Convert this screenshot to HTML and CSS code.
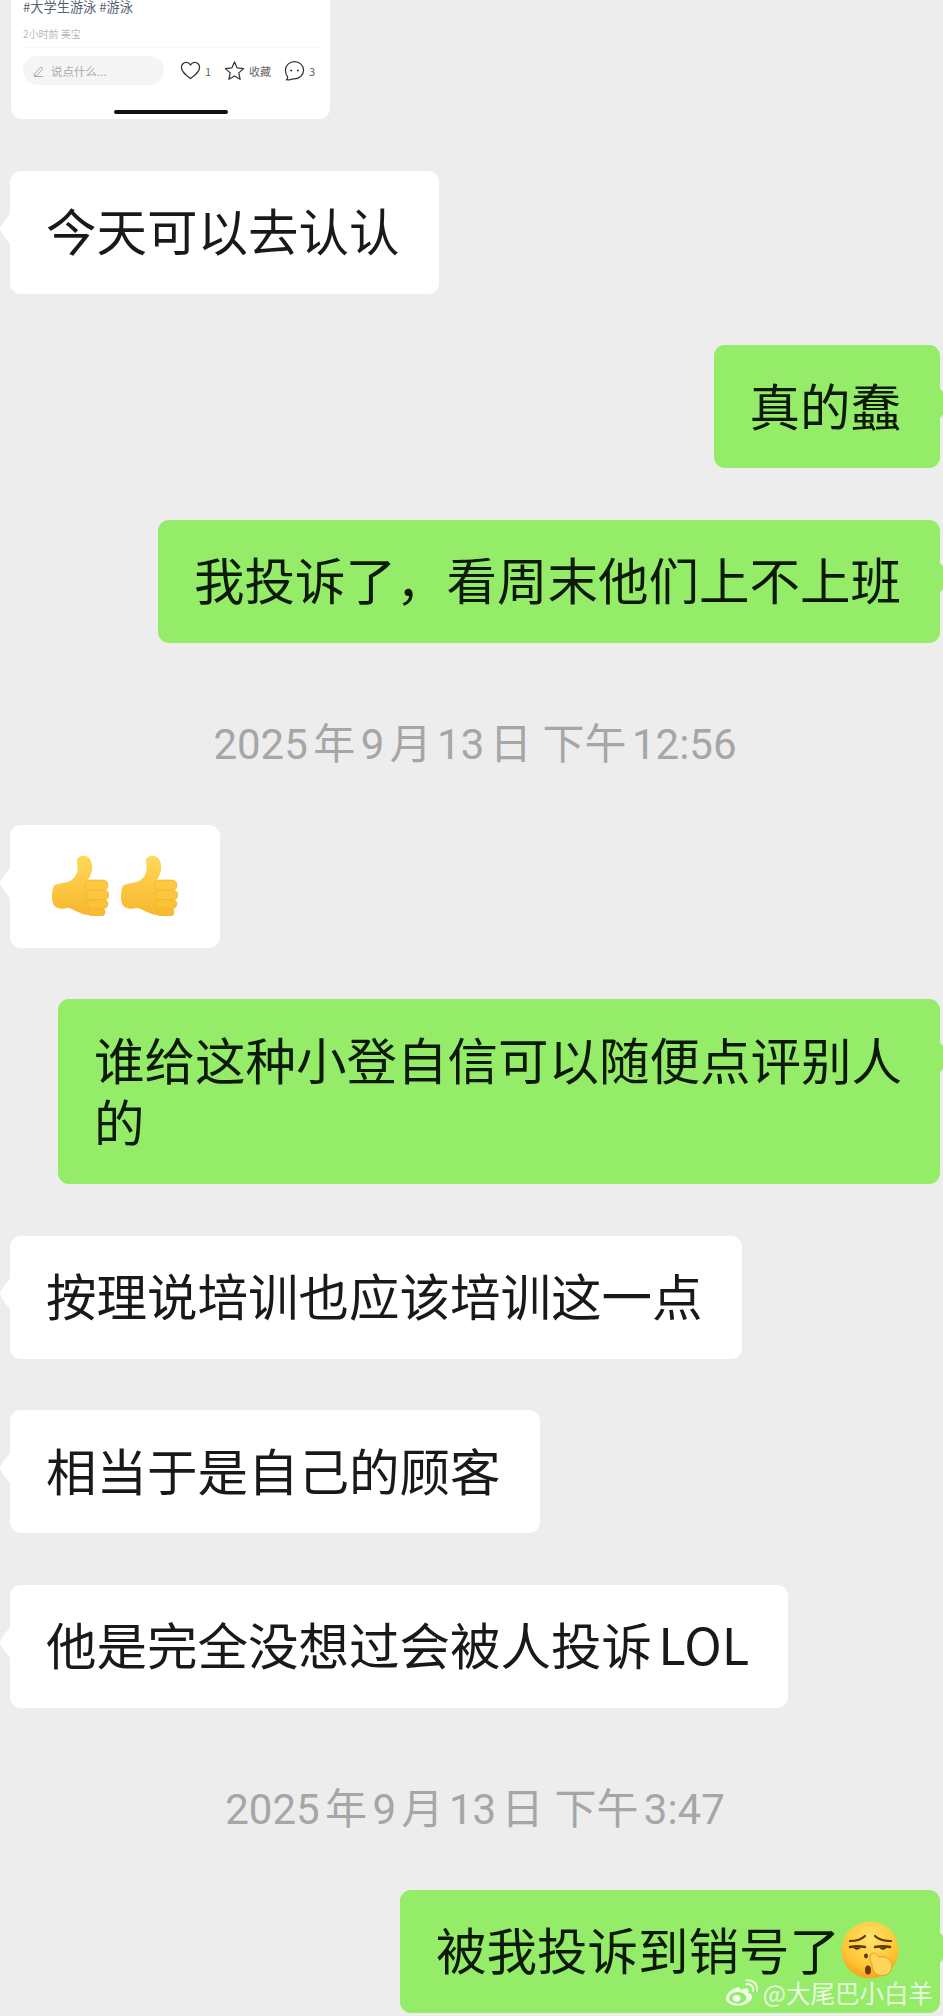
FILE: index.html
```html
<!DOCTYPE html>
<html lang="zh-CN">
<head>
    <meta charset="UTF-8">
    <meta name="viewport" content="width=device-width, initial-scale=1.0">
    <title>聊天记录</title>
    <link rel="stylesheet" href="styles.css">
</head>
<body>
    <svg class="defs" width="0" height="0">
        <defs>
            <linearGradient id="thumbFill" x1="0" y1="0" x2="0" y2="1">
                <stop offset="0" stop-color="#ffd95a"/>
                <stop offset="1" stop-color="#f8b62e"/>
            </linearGradient>
            <radialGradient id="faceFill" cx="0.5" cy="0.3" r="0.75">
                <stop offset="0" stop-color="#ffe36b"/>
                <stop offset="0.65" stop-color="#ffc533"/>
                <stop offset="1" stop-color="#f79a1e"/>
            </radialGradient>
            <symbol id="thumb" viewBox="0 0 57 61">
                <path d="M3 30c5-2 11-2 15-4 6-4 9-9 7-19-1-7 11-9 14-1 3 8 0 14-3 19l5 25v9c-4 2-9 1-15-2-5-2-7-4-11-4-3 1-7 1-9 0-4-1-6-5-6-11 0-6 1-11 3-12z" fill="url(#thumbFill)"/>
                <rect x="33" y="25" width="23" height="10.5" rx="5" fill="#fcc840" stroke="#f0ae24" stroke-width=".6"/>
                <rect x="34" y="35" width="23" height="10" rx="5" fill="#fcc63c" stroke="#f0ae24" stroke-width=".6"/>
                <rect x="35" y="44.500" width="21" height="9" rx="4.500" fill="#fbc238" stroke="#f0ae24" stroke-width=".6"/>
                <rect x="36" y="53" width="17" height="8" rx="4" fill="#f9bc30" stroke="#f0ae24" stroke-width=".6"/>
            </symbol>
        </defs>
    </svg>

    <main class="chat">
        <section class="card">
            <p class="tags">#大学生游泳 #游泳</p>
            <p class="meta">2小时前 美宝</p>
            <div class="actions">
                <div class="say">
                    <svg class="pen" viewBox="0 0 12 12"><path d="M1.500 9l6.500-7 2 1.800-6.500 6.700-2.300.4zM1 11.500h9" fill="none" stroke="#999" stroke-width=".8"/></svg>
                    <span>说点什么...</span>
                </div>
                <div class="action">
                    <svg class="act-icon" viewBox="0 0 22 20"><path d="M11 18.500C5 14 1.500 11 1.500 6.800 1.500 3.600 4 1.500 6.500 1.500c2 0 3.500 1 4.500 2.600 1-1.600 2.500-2.600 4.500-2.600 2.500 0 5 2.100 5 5.300 0 4.200-3.500 7.200-9.500 11.700z" fill="none" stroke="#333" stroke-width="1.300"/></svg>
                    <span>1</span>
                </div>
                <div class="action">
                    <svg class="act-icon" viewBox="0 0 22 21"><path d="M11 1.500l2.800 6.300 6.700.7-5 4.500 1.400 6.700-5.900-3.400-5.900 3.400 1.400-6.700-5-4.500 6.700-.7z" fill="none" stroke="#333" stroke-width="1.300" stroke-linejoin="round"/></svg>
                    <span>收藏</span>
                </div>
                <div class="action">
                    <svg class="act-icon" viewBox="0 0 22 21"><path d="M11 1.200c5.200 0 9.500 4 9.500 9s-4.300 9-9.500 9c-1.500 0-3 0-4.500.8-1.200.4-2.500.4-3.700.2.800-.8 1.200-1.800 1-3C2.500 15.500 1.500 13 1.500 10.200c0-5 4.300-9 9.500-9z" fill="none" stroke="#333" stroke-width="1.300"/><circle cx="7.500" cy="10.500" r="1" fill="#333"/><circle cx="14.500" cy="10.500" r="1" fill="#333"/></svg>
                    <span>3</span>
                </div>
            </div>
            <div class="home-bar"></div>
        </section>

        <div class="bubble in">今天可以去认认</div>
        <div class="bubble out">真的蠢</div>
        <div class="bubble out">我投诉了，看周末他们上不上班</div>

        <div class="stamp">2025 年 9 月 13 日  下午 12:56</div>

        <div class="bubble in thumbs">
            <svg class="thumb"><use href="#thumb"/></svg>
            <svg class="thumb"><use href="#thumb"/></svg>
        </div>
        <div class="bubble out wide">谁给这种小登自信可以随便点评别人的</div>
        <div class="bubble in">按理说培训也应该培训这一点</div>
        <div class="bubble in">相当于是自己的顾客</div>
        <div class="bubble in">他是完全没想过会被人投诉 LOL</div>

        <div class="stamp">2025 年 9 月 13 日  下午 3:47</div>

        <div class="bubble out last">
            被我投诉到销号了
            <svg class="shush" viewBox="0 0 60 60">
                <circle cx="29" cy="29" r="28.500" fill="url(#faceFill)"/>
                <path d="M9 20c5 0 11-1 15-5M34 15c4 4 11 5 16 5" fill="none" stroke="#5b3a12" stroke-width="2.200" stroke-linecap="round"/>
                <path d="M9 26c5-1 10-1 15 0M34 26c5-1 10-1 15 0" fill="none" stroke="#5b3a12" stroke-width="2.400" stroke-linecap="round"/>
                <path d="M12 26.500a4.500 4 0 0 0 8 0zM38 26.500a4.500 4 0 0 0 8 0z" fill="#4a2f10"/>
                <ellipse cx="25" cy="35" rx="2" ry="2.400" fill="#5b3a12"/>
                <ellipse cx="27" cy="49" rx="3" ry="4.500" fill="#6a3a12"/>
                <path d="M30 33c3-2 6 0 8 3 3-1 8 0 11 3 3 4 3 10-2 14-5 3-11 2-14-2-2-3-2-6-2-8-2-3-3-7-1-10z" fill="#ffd45a" stroke="#e89b1c" stroke-width="1"/>
            </svg>
        </div>
    </main>

    <div class="watermark">
        <svg class="weibo" viewBox="0 0 34 28">
            <path d="M14 8C7 9 1 15 1 20c0 4 6 7 12 7 8 0 15-5 15-9 0-3-3-4-4-4 1-3 0-5-2-5-2 0-5 1-6 2 0-2-1-3-2-3z" fill="#fff" fill-opacity=".85"/>
            <ellipse cx="13" cy="19" rx="9" ry="6" fill="#93ec69"/>
            <ellipse cx="12" cy="19.500" rx="4" ry="3.500" fill="#fff" fill-opacity=".9"/>
            <path d="M22 5c4-1 8 2 7 7M22 1c7-1 12 4 11 11" fill="none" stroke="#fff" stroke-opacity=".85" stroke-width="2" stroke-linecap="round"/>
        </svg>
        <span>@大尾巴小白羊</span>
    </div>
</body>
</html>
```

FILE: styles.css
```css
* {
    margin: 0;
    padding: 0;
    box-sizing: border-box;
}
html, body {
    height: 2016px;
    overflow: hidden;
}
body {
    position: relative;
    background-color: #ededed;
    font-family: "Noto Sans CJK SC", "Liberation Sans", sans-serif;
}
.defs {
    display: block;
    height: 0;
}
.chat {
    display: flex;
    flex-direction: column;
    gap: 51.4px;
    padding: 0 3px 0 10px;
}

/* shared post card, top is cut off by the screenshot */
.card {
    position: relative;
    flex: none;
    width: 319px;
    height: 119px;
    margin: 0 0 .6px 1px;
    padding: 0 12px;
    background-color: #fff;
    border-radius: 0 0 11px 11px;
    overflow: hidden;
}
.tags {
    font-size: 13.2px;
    line-height: 14px;
    color: #566374;
}
.meta {
    margin-top: 13px;
    padding-bottom: 6px;
    font-size: 10px;
    line-height: 14px;
    color: #b9b9b9;
    border-bottom: 1px solid #f7f7f7;
}
.actions {
    display: flex;
    align-items: center;
    margin-top: 8px;
}
.say {
    display: flex;
    flex: none;
    align-items: center;
    gap: 6px;
    width: 141px;
    height: 29px;
    margin-right: 16px;
    padding-left: 10px;
    background-color: #f5f5f5;
    border-radius: 15px;
    font-size: 11.5px;
    color: #aaa;
    white-space: nowrap;
}
.pen {
    width: 12px;
    height: 12px;
}
.action {
    display: flex;
    flex: none;
    align-items: center;
    gap: 4px;
    margin-right: 13px;
    font-size: 11px;
    color: #666;
    white-space: nowrap;
}
.act-icon {
    width: 21px;
    height: 21px;
}
.home-bar {
    position: absolute;
    left: 103px;
    bottom: 5px;
    width: 114px;
    height: 4.500px;
    background-color: #111;
    border-radius: 2px;
}

.bubble {
    position: relative;
    padding: 27.5px 39px 33.5px 36px;
    font-size: 50.5px;
    line-height: 62px;
    word-spacing: -5px;
    color: #191919;
    border-radius: 11px;
    white-space: nowrap;
}
.in {
    align-self: flex-start;
    background-color: #fff;
}
.out {
    align-self: flex-end;
    background-color: #95ec69;
    color: #0d1a07;
}
/* tail sits a fixed distance below the bubble's top */
.in::before, .out::after {
    content: "";
    position: absolute;
    top: 42px;
    width: 11px;
    height: 32px;
}
.in::before {
    left: -10px;
    background-color: #fff;
    clip-path: polygon(100% 0, 100% 100%, 45% 78%, 6% 56%, 0 50%, 6% 44%, 45% 22%);
}
.out::after {
    right: -10px;
    background-color: #95ec69;
    clip-path: polygon(0 0, 0 100%, 55% 78%, 94% 56%, 100% 50%, 94% 44%, 55% 22%);
}
.wide {
    width: 882px;
    padding-right: 30px;
    white-space: normal;
}
.thumbs {
    display: flex;
    gap: 12px;
    width: 210px;
    height: 123px;
    padding: 30px 0 0 41.5px;
}
.thumb {
    width: 57px;
    height: 61px;
}
.last {
    display: flex;
    align-items: center;
    gap: 2px;
    height: 123px;
}
.shush {
    width: 60px;
    height: 60px;
    flex: none;
    margin: 6px 0 0 -1px;
}

.stamp {
    margin: 20px 0 -2.600px;
    font-family: "Roboto", "Noto Sans CJK SC", sans-serif;
    font-size: 42px;
    line-height: 62px;
    word-spacing: -5px;
    text-align: center;
    color: #a6a6a6;
    white-space: pre;
}

/* weibo watermark lies over the last bubble */
.watermark {
    position: absolute;
    right: 10px;
    top: 1977px;
    display: flex;
    align-items: center;
    gap: 5px;
    font-size: 24.500px;
    line-height: 32px;
    color: rgba(255, 255, 255, .82);
    white-space: nowrap;
}
.weibo {
    width: 33px;
    height: 28px;
}
```
